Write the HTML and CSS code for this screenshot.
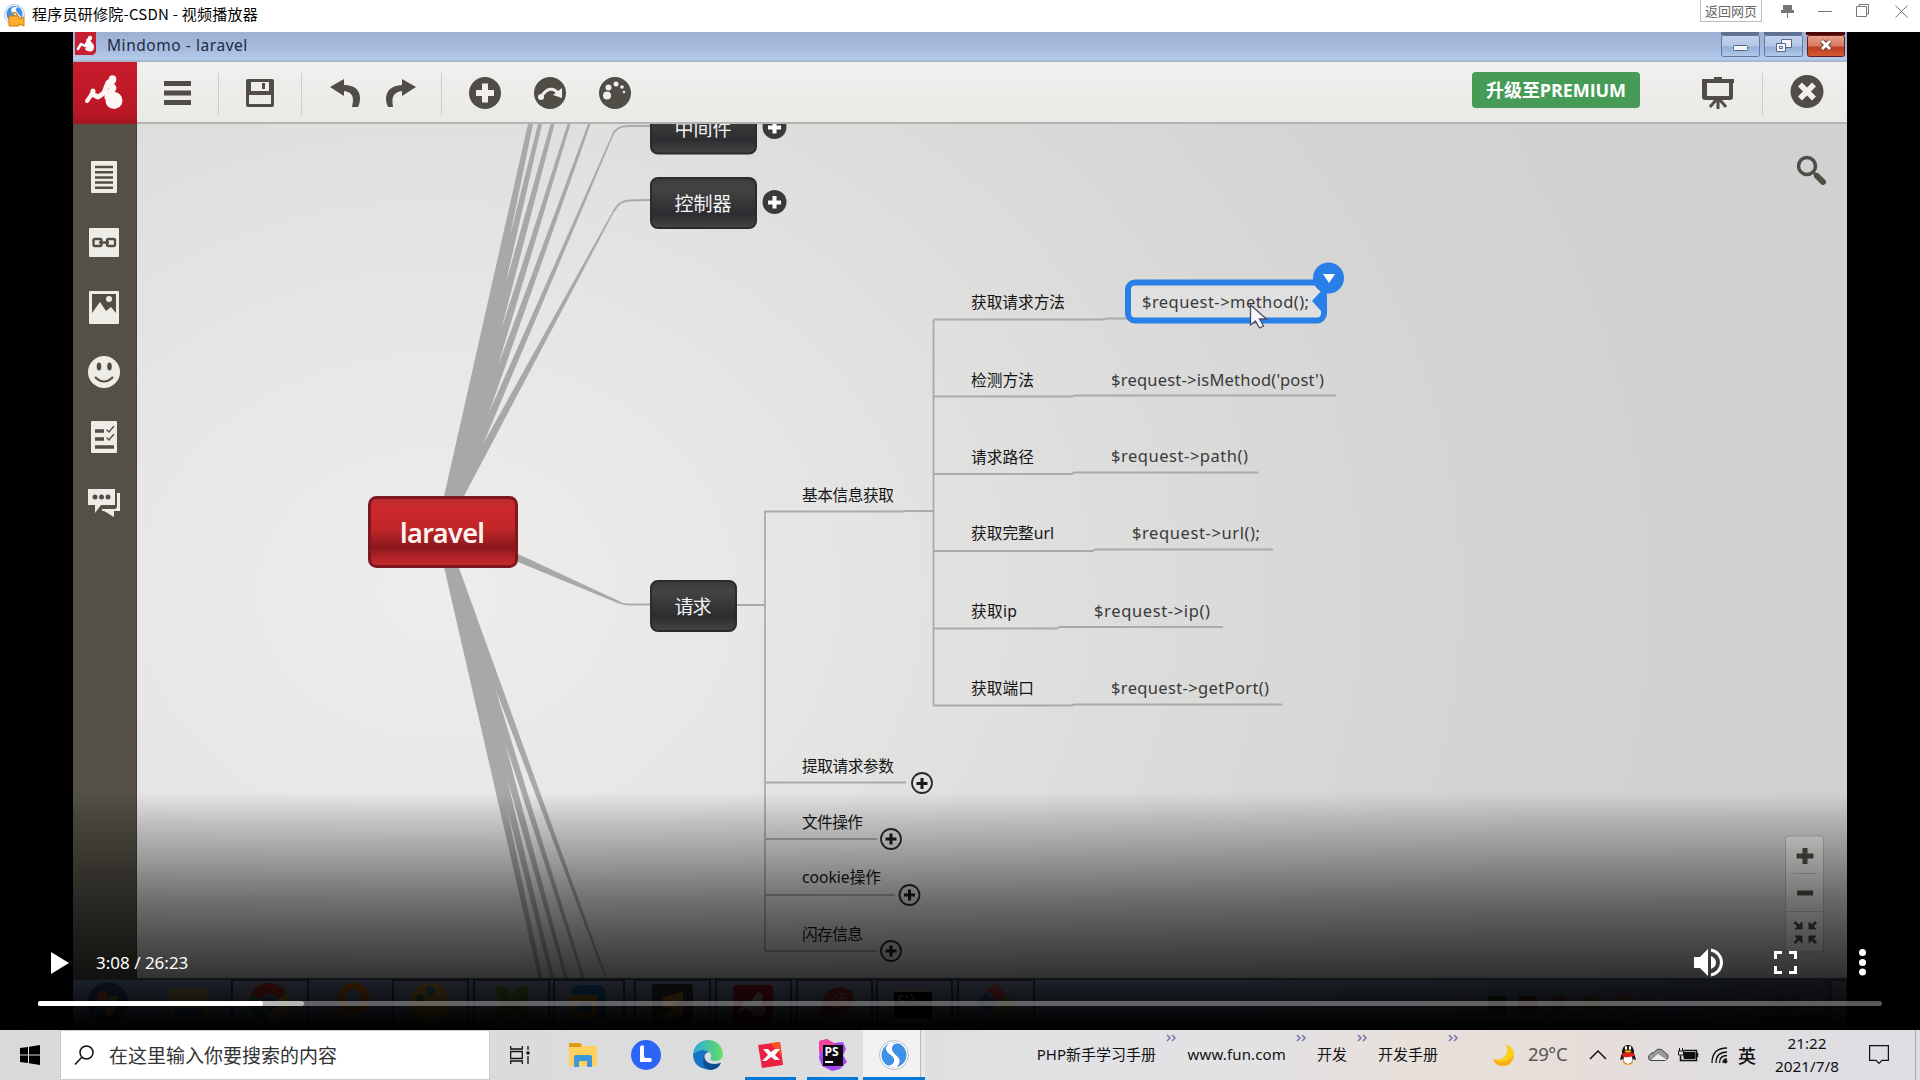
FILE: index.html
```html
<!DOCTYPE html>
<html lang="zh-CN">
<head>
<meta charset="utf-8">
<title>程序员研修院-CSDN - 视频播放器</title>
<link rel="stylesheet" href="styles.css">
</head>
<body>
<div class="screen">
  <header class="window-bar">
    <svg class="window-icon" width="22" height="26" viewBox="0 0 22 26"><circle cx="10.500" cy="11.500" r="10" fill="#eef5fb" stroke="#b7cbd9"/><circle cx="10.500" cy="11" r="8" fill="#3f8fe8"/><path d="M14 4C8 3 5 7 9 10l3 3c2 3-1 5-5 4l-2-1 2 4h6l4-6-4-5c-2-2-1-4 1-5z" fill="#fff"/><path d="M8 14v-3q2.500-3 5 0v3" fill="none" stroke="#d98209" stroke-width="1.500"/><path d="M5 13h10v3l5-2v9l-5-2v2H5z" fill="#fcae2c" stroke="#d37c0c"/></svg>
    <span class="window-title">程序员研修院-CSDN - 视频播放器</span>
    <span class="back-link">返回网页</span>
    <svg class="window-controls" width="158" height="32" viewBox="0 0 158 32" fill="none" stroke="#777"><path d="M21 5h9v5h2v3H19v-3h2z" fill="#777" stroke="none"/><path d="M25.500 12v6M56 11.500h14M94.500 6.500h10v10h-10zM97 6V4.500h9.500V14H105M133.500 5.500l12 12M145.500 5.500l-12 12"/></svg>
  </header>

  <main class="player">
    <div class="frame">
      <div class="app-title">
        <svg width="34" height="29" viewBox="0 0 34 29"><path d="M2 0h21v20l-3 3H2z" fill="#c51f31"/><g fill="none" stroke="#fff" stroke-linecap="round" stroke-linejoin="round"><path d="M5 17l3-5 4 2 3-5" stroke-width="2.500"/><path d="M15 8l2 3-3 6" stroke-width="3.500"/></g><circle cx="17" cy="6" r="2.200" fill="#fff"/><ellipse cx="17" cy="15" rx="4" ry="4.500" fill="#fff"/></svg>
        <span class="app-name">Mindomo - laravel</span>
        <svg class="app-buttons" width="128" height="29" viewBox="0 0 128 29">
          <defs><linearGradient id="glass" x2="0" y2="1"><stop stop-color="#c4d3ec"/><stop offset=".5" stop-color="#b3c6e5"/><stop offset=".55" stop-color="#91aed9"/><stop offset="1" stop-color="#b3cbea"/></linearGradient><linearGradient id="glass-red" x2="0" y2="1"><stop stop-color="#e8a08d"/><stop offset=".5" stop-color="#d87860"/><stop offset=".55" stop-color="#bb3d20"/><stop offset="1" stop-color="#d45c35"/></linearGradient></defs>
          <path d="M2 0h38v3H2zM45 0h38v3H45z" fill="#60708f"/><path d="M87 0h39v3H87z" fill="#4b0808"/>
          <rect x="2.500" y="3.500" width="38" height="21" rx="2" fill="url(#glass)" stroke="#60779f"/><rect x="45.500" y="3.500" width="38" height="21" rx="2" fill="url(#glass)" stroke="#60779f"/><rect x="88.500" y="3.500" width="37" height="21" rx="2" fill="url(#glass-red)" stroke="#651d20"/>
          <g fill="#f3f6fb" stroke="#566886"><rect x="14.500" y="13.500" width="14" height="5" rx="1"/><path d="M62.500 7.500h10v8h-10z"/><path d="M57.500 11.500h9v8h-9z"/><path d="M60.500 14.500h3v2h-3z"/></g>
          <path d="M103 9l8 8M111 9l-8 8" stroke="#714141" stroke-width="5"/><path d="M103 9l8 8M111 9l-8 8" stroke="#fff" stroke-width="3"/>
        </svg>
      </div>

      <div class="toolbar">
        <svg class="brand" width="64" height="63" viewBox="0 0 64 63"><g fill="none" stroke="#fff5f3" stroke-linecap="round" stroke-linejoin="round"><path d="M14 39l5-7" stroke-width="4"/><path d="M19 32l6 3 6-4 3-8" stroke-width="5"/><path d="M36 21l4 5-5 9" stroke-width="7"/></g><circle cx="20" cy="29" r="2.500" fill="#fff5f3"/><ellipse cx="39.500" cy="17.500" rx="3.800" ry="4.200" fill="#fff5f3"/><ellipse cx="41" cy="38.500" rx="8.500" ry="8.500" fill="#fff5f3"/></svg>
        <svg class="tools" width="520" height="61" viewBox="137 62 520 61" fill="#504d47">
          <path d="M218.500 73v42M301.500 73v42M441.500 73v42" stroke="#ccc"/>
          <path d="M164 81h27v5h-27zM164 90.500h27v5h-27zM164 100h27v5h-27z"/>
          <path d="M248 79h24q2 0 2 2v24q0 2-2 2h-24q-2 0-2-2V81q0-2 2-2zM251 82v9h18v-9zM249 95v9h22v-9z" fill-rule="evenodd"/><path d="M262 83h3v6h-3z"/>
          <path d="M330 87l14-8v6q16 0 16 14 0 4-2 8h-6q4-15-8-16v5z"/><path d="M416 87l-14-8v6q-16 1-16 14 0 4 2 8h5q-3-15 9-16v5z"/>
          <circle cx="485" cy="93" r="16"/><circle cx="550" cy="93" r="16"/><circle cx="615" cy="93" r="16"/>
          <path d="M485 83.500v19M476 93h18" stroke="#f0efec" stroke-width="6"/>
          <path d="M541 97q9-14 18-3" fill="none" stroke="#f0efec" stroke-width="3"/><path d="M562 88v10l-9-3z" fill="#f0efec"/><circle cx="541" cy="97" r="3" fill="#f0efec"/>
          <g fill="#f0efec"><circle cx="607" cy="95.500" r="4"/><circle cx="608.500" cy="87.500" r="3"/><circle cx="616" cy="84" r="2.500"/><circle cx="622" cy="87" r="1.800"/><circle cx="624" cy="92" r="1.300"/></g>
        </svg>
        <span class="premium">升级至PREMIUM</span>
        <svg width="190" height="61" viewBox="1657 62 190 61" fill="#504d47"><path d="M1702 79h12v-2h8v2h12v4h-1v14q0 3-3 3h-25q-3 0-3-3V83zM1707 83v13h22V83z" fill-rule="evenodd"/><path d="M1718 99v10M1716 100l-6 7M1720 100l6 7" stroke="#504d47" stroke-width="3"/><path d="M1762.500 73v42" stroke="#ccc"/><circle cx="1807" cy="91.500" r="16.500"/><path d="M1800 84.500l14 14M1814 84.500l-14 14" stroke="#f0efec" stroke-width="5.500"/></svg>
      </div>

      <div class="workspace">
        <svg class="sidebar" width="64" height="854" viewBox="73 124 64 854" fill="#edece7">
          <rect x="91" y="161" width="26" height="32" rx="1"/><path d="M95 167h18M95 172.200h18M95 177.400h18M95 182.600h18M95 187.800h18" stroke="#514e44" stroke-width="2.500"/>
          <rect x="89" y="228" width="30" height="29" rx="1"/><g fill="none" stroke="#514e44" stroke-width="2.400"><rect x="93.500" y="239" width="8" height="7" rx="1.500"/><rect x="107" y="239" width="8" height="7" rx="1.500"/><path d="M99 242.500h10"/></g>
          <rect x="89" y="291" width="30" height="33" rx="1"/><path d="M92 294h24v19l-5-6-5 4-6-9-8 11z" fill="#514e44"/><circle cx="109" cy="299" r="3"/>
          <circle cx="104" cy="372" r="16"/><g fill="#514e44"><ellipse cx="99" cy="366.500" rx="2.300" ry="4"/><ellipse cx="109.500" cy="366.500" rx="2.300" ry="4"/></g><path d="M95 377q9 9 18 0" fill="none" stroke="#514e44" stroke-width="2"/>
          <rect x="91" y="421" width="26" height="32" rx="1"/><path d="M95 431h9M95 439h9M95 447h19" stroke="#514e44" stroke-width="3.300"/><path d="M106.500 429.500l2.500 2.500 5-6M106.500 437.500l2.500 2.500 5-6" fill="none" stroke="#514e44" stroke-width="1.300"/>
          <path d="M88 489h27v16h-14l-6 8v-8h-7z"/><path d="M117 493h3v18h-6v6l-10-6h-2v-2h13q2 0 2-3z"/><g fill="#514e44"><circle cx="95" cy="497" r="2.500"/><circle cx="101.500" cy="497" r="2.500"/><circle cx="108" cy="497" r="2.500"/></g>
          <path d="M136.500 124v854" stroke="#454138"/>
        </svg>

        <svg class="mindmap" width="1710" height="854" viewBox="137 124 1710 854">
          <defs>
            <linearGradient id="root-fill" x2="0" y2="1"><stop stop-color="#bd2a30"/><stop offset=".2" stop-color="#cc292b"/><stop offset=".45" stop-color="#c12629"/><stop offset=".72" stop-color="#8c171c"/><stop offset=".95" stop-color="#c3292d"/></linearGradient>
            <linearGradient id="topic-fill" x2="0" y2="1"><stop stop-color="#3a3a3a"/><stop offset=".2" stop-color="#444"/><stop offset=".72" stop-color="#2c2d30"/><stop offset="1" stop-color="#464542"/></linearGradient>
          </defs>
          <g fill="#a6a8a9">
            <path d="M436 532L528 124h5L449 532zM436 532L538 124h4L449 532zM436 532L550.500 124h4L449 532zM436 532L567.500 124h3L448 532zM436 532L588 124h2.500L447 532z"/>
            <path d="M436 532L611.500 136h1.500L446 532zM434 532L613.500 210h1.500L445 532z"/>
            <path d="M443 514l75 40 103 48-1 2-102-42-75-22z"/>
            <path d="M436 532L538.500 978h4L449 532zM436 532L550.500 978h3.500L449 532zM436 532L564.500 978h3L449 532zM436 532L582 978h2.500L447 532zM436 532L605 978h2L446 532z"/>
          </g>
          <g class="links">
            <path d="M612 136q4-10 16-10h22M614 211q5-10 15-10.500l21-.5M620 603q5 1.500 10 1.500h20"/>
            <path d="M737 605h28M904 511.500h-139V951M904 511h29.500M933.500 705.500V320"/>
            <path d="M933.500 319.500H1104l2-1h22M933.500 396.500H1072l2-1h262M933.500 474H1072l2-1.500h184M933.500 551H1093l2-1.500h178M933.500 628.500H1057l2-1.500h164M933.500 705.500H1072l2-1h208"/>
            <path d="M765 782.500h141M765 839h112M765 895h130M765 951h112"/>
          </g>
          <rect x="369.500" y="497.500" width="147" height="69" rx="7" fill="url(#root-fill)" stroke="#7d1820" stroke-width="3"/>
          <text class="root-text" x="400" y="543" textLength="85">laravel</text>
          <g fill="url(#topic-fill)" stroke="#2b2b2b" stroke-width="2"><rect x="651" y="103" width="105" height="50.500" rx="7"/><rect x="651" y="178" width="105" height="50" rx="7"/><rect x="651" y="581" width="85" height="50" rx="7"/></g>
          <g class="topic-text"><text x="674.500" y="136" textLength="57">中间件</text><text x="674.500" y="211" textLength="57">控制器</text><text x="674.500" y="614" textLength="37">请求</text></g>
          <g fill="#3b3a38"><circle cx="774.500" cy="127" r="12"/><circle cx="774.500" cy="202" r="12"/></g>
          <path d="M774.500 121v12.500M768 127.500h13M774.500 196v12.500M768 202.500h13" stroke="#fff" stroke-width="4"/>
          <g class="topic-sub">
            <text x="802" y="501" textLength="92">基本信息获取</text><text x="802" y="772" textLength="92">提取请求参数</text><text x="802" y="828" textLength="61">文件操作</text><text x="802" y="883" textLength="79">cookie操作</text><text x="802" y="940" textLength="61">闪存信息</text>
            <text x="971" y="308" textLength="94">获取请求方法</text><text x="971" y="386" textLength="63">检测方法</text><text x="971" y="463" textLength="63">请求路径</text><text x="971" y="539" textLength="83">获取完整url</text><text x="971" y="617" textLength="46">获取ip</text><text x="971" y="694" textLength="63">获取端口</text>
          </g>
          <rect x="1128" y="282.500" width="196" height="38" rx="7" fill="#e0e0e0" stroke="#287fe8" stroke-width="6"/>
          <path d="M1312 301l10-11h5v22h-5z" fill="#287fe8"/><circle cx="1328.500" cy="278" r="15.500" fill="#287fe8"/><path d="M1323 274h12l-6 9z" fill="#fff"/>
          <g class="code">
            <text x="1142" y="307.500" textLength="167">$request-&gt;method();</text><text x="1111" y="385.500" textLength="213">$request-&gt;isMethod('post')</text><text x="1111" y="462" textLength="137">$request-&gt;path()</text><text x="1132" y="539" textLength="128">$request-&gt;url();</text><text x="1094" y="616.500" textLength="116">$request-&gt;ip()</text><text x="1111" y="693.500" textLength="158">$request-&gt;getPort()</text>
          </g>
          <path d="M1250.500 305v20l5-4 4 7 4-2-4-7h7z" fill="#f8f8ff" stroke="#4a4a5c" stroke-width="1.300"/>
          <g fill="none" stroke="#2a2a29" stroke-width="1.800"><circle cx="922" cy="783" r="10"/><circle cx="891" cy="839" r="10"/><circle cx="909.500" cy="895" r="10"/><circle cx="891" cy="951" r="10"/></g>
          <path d="M922 778v11M916.500 783.500h11M891 833.500v11M885.500 839h11M909.500 889.500v11M904 895h11M891 945.500v11M885.500 951h11" stroke="#1a1a1a" stroke-width="3"/>
          <g fill="none" stroke="#504d47"><circle cx="1807" cy="166" r="8.500" stroke-width="3.500"/><path d="M1813 172l3 3" stroke-width="3"/><path d="M1817 176l6 6" stroke-width="6" stroke-linecap="round"/></g>
          <rect x="1785.500" y="836" width="38" height="116" rx="3" fill="#e9e8e5" stroke="#b5b5b5"/><path d="M1793 873.500h23M1786 911.500h38" stroke="#c2c1be"/>
          <path d="M1805 848v16M1796.500 856h17M1797 893h16" stroke="#504d47" stroke-width="5"/>
          <g fill="#504d47" stroke="#504d47" stroke-width="3"><path d="M1794.500 922l6 6M1816 922l-6 6M1794.500 943l6-6M1816 943l-6-6"/><path d="M1802 922v7h-7zM1809 922v7h7zM1802 943v-7h-7zM1809 943v-7h7z" stroke-width="1"/></g>
        </svg>
      </div>

      <svg class="old-taskbar" width="1774" height="52" viewBox="73 978 1774 52">
        <path d="M73 979h1774" stroke="#4c5871" stroke-width="2"/>
        <g fill="#b1bac9" fill-opacity=".25" stroke="#3b455a" stroke-width="2"><path d="M232 980h76v50h-76zM393 980h75v50h-75zM474 980h75v50h-75zM554 980h70v50h-70zM635 980h75v50h-75zM716 980h75v50h-75zM797 980h75v50h-75zM877 980h75v50h-75zM958 980h76v50h-76zM1831 980h16v50h-16z"/></g>
        <circle cx="108" cy="1003" r="21" fill="#304f7e" stroke="#7993b7"/><path d="M98 993q6-4 10 1l-2 9q-6-4-10 0z" fill="#dc602e"/><path d="M109 995q5 3 9 0l-3 10q-5 3-9 0z" fill="#7fb03a"/><path d="M95 1005q6-3 10 0l-2 9q-5-4-9 0z" fill="#438fd1"/><path d="M106 1006q5 3 9 0l-2 9q-5 3-9 0z" fill="#f2be38"/>
        <path d="M169 989l39-1 1 31h-38z" fill="#bca658"/><path d="M174 1008h30v14h-30z" fill="#5c88a7"/>
        <path d="M251 994a20 20 0 0 1 36 0l-18 9z" fill="#c8372b"/><path d="M251 994q-5 22 15 28l3-18z" fill="#3b9a48"/><path d="M287 994q5 25-19 28l3-18z" fill="#e1bc2c"/><circle cx="269" cy="1003" r="8" fill="#306cc1" stroke="#8f9cab" stroke-width="2"/>
        <circle cx="354" cy="998" r="12" fill="none" stroke="#dc7610" stroke-width="7"/><path d="M345 1008l-12 12" stroke="#dc7610" stroke-width="8"/>
        <circle cx="430" cy="1003" r="20" fill="#d8a732"/><circle cx="430" cy="991" r="5" fill="#3e8d9c"/><circle cx="420" cy="998" r="4" fill="#42852e"/>
        <path d="M494 987q12-4 18 10 6-16 18-8l-5 15q10 8 0 17l-12-7-14 7q-8-9 1-17z" fill="#6c922a"/>
        <rect x="571" y="985" width="35" height="34" rx="8" fill="#2277bd"/><path d="M571 995h26v24h-20q-6 0-6-8zM578 1002v11h14v-11z" fill="#d59b28" fill-rule="evenodd"/>
        <rect x="652" y="984" width="41" height="42" rx="3" fill="#3b3b38"/><path d="M663 997l20-5v8l-11 4 11 3v8l-21 6v-7l11-4-10-4z" fill="#e29b27"/>
        <rect x="733" y="985" width="40" height="38" rx="4" fill="#a91627"/><path d="M738 1012l7-11 5 1 8-10 5 3-2 9q7 4 3 10-9 7-12-2l-6-4-5 4z" fill="#ded1ca"/>
        <path d="M818 1015l6-20q13-14 29-3 2 17-11 24-12 4-24-1z" fill="#a73933"/><path d="M844 994q-13 0-12 12 10 5 14-8-8-3-8 6" fill="none" stroke="#df6b5f" stroke-width="2"/>
        <path d="M894 988h38v30h-38z"/><path d="M894 988h38v4h-38z" fill="#aaa"/><text class="prompt" x="898" y="1002">C:\_</text>
        <path d="M995 983l12 12-8 8-12-12z" fill="#d55441"/><path d="M986 992l11 11-9 9-12-9z" fill="#405fae"/><path d="M1008 995l8 8-18 18-8-9z" fill="#9a982b"/>
        <g fill="none" stroke="#777" stroke-width="2"><path d="M1459 998h10v14h-10zM1647 1004l16-6-5 16-4-7zM1737 998h12v14h-12zM1803 998h15v12h-15z"/><path d="M1677 997l8 4q0 9-8 12-8-3-8-12z" stroke="#4964a8"/></g>
        <path d="M1488 996h18v18h-18z" fill="#1d3f22"/><path d="M1519 996h18v18h-18z" fill="#522"/><path d="M1552 996h14v18h-14z" fill="#644"/><circle cx="1591" cy="1004" r="9" fill="#67592a"/><circle cx="1623" cy="1003" r="7" fill="none" stroke="#864e1e" stroke-width="4"/><circle cx="1781" cy="1006" r="6" fill="none" stroke="#833" stroke-width="3"/>
      </svg>
    </div>

    <div class="controls">
      <div class="control-row">
        <svg class="play" width="18" height="24" viewBox="0 0 18 24"><path d="M0 1l18 11L0 23z" fill="#fff"/></svg>
        <span class="time">3:08 / 26:23</span>
        <svg class="control-icons" width="190" height="34" viewBox="1685 946 190 34" fill="#fff"><path d="M1694 957h6l8-8v27l-8-8h-6zM1711 956q5 2 5 6.500t-5 6.500z"/><path d="M1711 950a12.700 12.700 0 0 1 0 25" fill="none" stroke="#fff" stroke-width="3"/><path d="M1774 959v-8h8v3h-5v5zM1789 951h8v8h-3v-5h-5zM1774 966h3v5h5v3h-8zM1794 966h3v8h-8v-3h5z"/><circle cx="1862.500" cy="952.500" r="3.500"/><circle cx="1862.500" cy="962.500" r="3.500"/><circle cx="1862.500" cy="972" r="3.500"/></svg>
      </div>
      <div class="progress"><div class="buffered"><div class="played"></div></div></div>
    </div>
  </main>

  <footer class="taskbar">
    <div class="cell"><svg width="20" height="20" viewBox="0 0 20 20"><path d="M0 3l8-1v7.500H0zM9 1.800L20 0v9.500H9zM0 10.500h8V18l-8-1zM9 10.500h11V20L9 18.200z"/></svg></div>
    <div class="search"><svg width="20" height="20" viewBox="0 0 20 20" fill="none" stroke="#111" stroke-width="1.500"><circle cx="12.500" cy="7.500" r="6.500"/><path d="M8 12l-7 7.500"/></svg><span>在这里输入你要搜索的内容</span></div>
    <div class="cell"><svg width="20" height="20" viewBox="0 0 20 20" fill="none" stroke="#111" stroke-width="1.300"><path d="M.7 1v3h11.600V1M.7 19v-3h11.600v3M.7 6.500h11.600v7H.7zM18 1v4M18 11v8"/><path d="M16.500 6.500h3v3h-3z" fill="#111" stroke="none"/></svg></div>
    <div class="cell"><svg width="28" height="24" viewBox="0 0 28 24"><path d="M0 1q0-1 1-1h10l2 3h15v20H0z" fill="#ffd05c"/><path d="M0 4V1q0-1 1-1h10l2 2-2 2z" fill="#dc9b10"/><path d="M5 24V14q0-2 2-2h14q2 0 2 2v10h-5v-6h-8v6z" fill="#3c98dc"/></svg></div>
    <div class="cell"><svg width="30" height="30" viewBox="0 0 30 30"><circle cx="15" cy="15" r="15" fill="#2a65f8"/><path d="M9 7q1-3 4-1v10q0 2 2 2h4q3 0 1 4H9z" fill="#fff"/></svg></div>
    <div class="cell"><svg width="30" height="30" viewBox="0 0 30 30"><defs><linearGradient id="edge-top"><stop stop-color="#27a7dc"/><stop offset="1" stop-color="#67df63"/></linearGradient></defs><path d="M0 14C2-4 28-5 30 14q0 7-8 7-6 0-4-4 1-3-2-5Q9 7 0 14z" fill="url(#edge-top)"/><path d="M0 14q9-7 16-2-5 1-5 7 1 9 17 4-6 9-16 6Q0 26 0 14z" fill="#1672c3"/><path d="M11 16q-3 12 6 14 8 0 11-7-15 4-17-7z" fill="#0c4d91"/></svg></div>
    <div class="cell running"><svg width="26" height="28" viewBox="0 0 26 28"><path d="M0 4L22 1l3 23-21 3z" fill="#ed1f43"/><path d="M12 2l10-1 2 14z" fill="#ff5026"/><path d="M5 8h5l3 3 4-3h5l-5 6 5 5h-5l-4-3-5 4H4l6-6z" fill="#fff"/></svg></div>
    <div class="cell running"><svg width="30" height="32" viewBox="0 0 30 32"><path d="M1 2l8-2 7 4 9-1 3 7-3 6 4 7-7 7-8 2-10-5-3-8 1-8z" fill="#a348ef"/><path d="M1 2l8-2 8 5-16 9z" fill="#f0459a"/><path d="M5 6h20v21H5z" fill="#0c0711"/><text class="ps" x="6.500" y="17">PS</text><path d="M7 22h8v2H7z" fill="#fff"/></svg></div>
    <div class="cell running active"><svg width="30" height="30" viewBox="0 0 30 30"><circle cx="15" cy="15" r="14.500" fill="#fff" stroke="#bbb"/><circle cx="15" cy="15" r="12.500" fill="#3e90e9"/><path d="M21 3q-9 0-8 7 1 3 6 7 4 5-2 11l-9-2q8-1 7-7-1-3-6-6-5-6 2-10z" fill="#fff"/></svg></div>
    <div class="link-item">PHP新手学习手册<svg width="11" height="8" viewBox="0 0 11 8"><path d="M1 1l3 3-3 3M6 1l3 3-3 3"/></svg></div>
    <div class="link-item web">www.fun.com<svg width="11" height="8" viewBox="0 0 11 8"><path d="M1 1l3 3-3 3M6 1l3 3-3 3"/></svg></div>
    <div class="link-item">开发<svg width="11" height="8" viewBox="0 0 11 8"><path d="M1 1l3 3-3 3M6 1l3 3-3 3"/></svg></div>
    <div class="link-item">开发手册<svg width="11" height="8" viewBox="0 0 11 8"><path d="M1 1l3 3-3 3M6 1l3 3-3 3"/></svg></div>
    <div class="weather"><svg width="24" height="24" viewBox="0 0 24 24"><path d="M14 1q9 4 8 12-2 10-12 10-6 0-9-7 8 2 12-3 4-5 1-12z" fill="#fdce18"/><path d="M22 13q-2 10-12 10-6 0-9-7 9 7 21-3z" fill="#faac18"/></svg><span>29°C</span></div>
    <div class="tray"><svg width="150" height="50" viewBox="1585 1030 150 50" fill="none" stroke="#111"><path d="M1590 1059l8-8 8 8" stroke-width="1.500"/><g stroke="none"><ellipse cx="1628" cy="1062" rx="5" ry="3" fill="#f6a800"/><path d="M1622 1053q0-8 6-8t6 8l2 7-3-1q-1 5-5 5t-5-5l-3 1z" fill="#111"/><ellipse cx="1628" cy="1059" rx="4.500" ry="5" fill="#fff"/><path d="M1622 1053h12v3q-7 2-11 1z" fill="#e02020"/><ellipse cx="1626" cy="1048" rx="1.200" ry="2" fill="#fff"/><ellipse cx="1630" cy="1048" rx="1.200" ry="2" fill="#fff"/><ellipse cx="1628" cy="1051.500" rx="3.500" ry="1.200" fill="#f6a800"/></g><path d="M1651 1060.500q-4-1-2-5 2-3 5-3 5-7 11 0 4 2 3 5-1 3-4 3z" fill="#999" stroke="#444"/><path d="M1651 1060l7-6 9 6z" fill="#eee" stroke="none"/><path d="M1683.500 1050.500h13v10h-16v-5M1697.500 1053v4" stroke-width="1.500"/><path d="M1684 1052.500h11v6h-11z" fill="#111"/><path d="M1678.500 1051h5v4h-5zM1679.500 1051v-3M1682.500 1051v-3"/><path d="M1712 1063q0-15 15-15M1716 1063q0-11 11-11M1719.500 1063q0-7.500 7.500-7.500M1723 1063q0-4 4-4" stroke-width="1.300"/><circle cx="1725.500" cy="1061.500" r="1.500" fill="#111"/></svg><span class="ime">英</span></div>
    <div class="clock"><span>21:22</span><span>2021/7/8</span></div>
    <div class="notice"><svg width="20" height="20" viewBox="0 0 20 20" fill="none" stroke="#111" stroke-width="1.200"><path d="M.6.6h18.800v14.800H13l-3 3-3-3H.6z"/></svg></div>
  </footer>
</div>
</body>
</html>
```
FILE: styles.css
```css
* { box-sizing: border-box; }
body { margin: 0; font-family: "Noto Sans", "Noto Sans CJK SC", sans-serif; color: #111; }
svg { display: block; flex: none; }
.screen { width: 1920px; height: 1080px; display: flex; flex-direction: column; overflow: hidden; background: #000; }

.window-bar { height: 32px; display: flex; background: #fff; padding-left: 4px; }
.window-icon { margin-top: 3px; }
.window-title { margin-left: 6px; font: 15px/27px "Noto Sans CJK SC", sans-serif; letter-spacing: .24px; color: #000; white-space: nowrap; }
.back-link { margin-left: auto; width: 62px; height: 22px; border: 1px solid #bbb; border-top: 0; text-align: center; font: 13px/21px "Noto Sans CJK SC", sans-serif; color: #666; }

.player { position: relative; height: 998px; display: flex; justify-content: center; }
.frame { width: 1774px; height: 998px; display: flex; flex-direction: column; }
.app-title { height: 30px; display: flex; background: linear-gradient(#9bb0d3, #a7bcdf 60%, #b4cbec 90%, #a5adc4); }
.app-name { font-size: 15.5px; line-height: 27px; color: #202c42; letter-spacing: .55px; white-space: nowrap; }
.app-buttons { margin-left: auto; }
.toolbar { height: 62px; display: flex; background: linear-gradient(#f1f0ef, #e9e9e5); border-bottom: 2px solid #b4b3b1; }
.brand { background: linear-gradient(#c71c2b, #bb1725 80%, #9b1520); margin-bottom: -2px; }
.premium { margin: 10px 17px 0 auto; width: 168px; height: 36px; border-radius: 4px; background: #469c57; color: #fff; text-align: center; font: 700 18px/37px "Open Sans", "Noto Sans CJK SC", sans-serif; white-space: nowrap; letter-spacing: -.1px; }
.workspace { height: 854px; display: flex; }
.sidebar { background: #545047; }
.mindmap { background: radial-gradient(ellipse 1550px 1250px at 300px 470px, #eeedec, #e6e6e5 23%, #d9d9d8 53%, #d2d2d2 72%, #d1d1d1); }
.links { fill: none; stroke: #a9aaaa; stroke-width: 1.8; }
.root-text { font-size: 27px; font-weight: 600; fill: #fff3f0; }
.topic-text { font-family: "Noto Sans CJK SC", sans-serif; font-size: 19px; fill: #f4f4f4; }
.topic-sub { font-family: "Noto Sans", "Noto Sans CJK SC", sans-serif; font-size: 15.7px; fill: #151515; }
.code { font-size: 16.5px; fill: #3a3a3a; }
.prompt { font: 10px "Liberation Mono", monospace; fill: #ddd; }
.old-taskbar { background: linear-gradient(90deg, #8096bf, #869cbe 65%, #4c5668); }

.controls { position: absolute; inset: 0; display: flex; flex-direction: column; justify-content: flex-end; background: linear-gradient(transparent 760px, rgba(0,0,0,.15) 788px, rgba(0,0,0,.33) 828px, rgba(0,0,0,.51) 868px, rgba(0,0,0,.65) 908px, rgba(0,0,0,.75) 938px, rgba(0,0,0,.84) 960px, rgba(0,0,0,.93) 978px, #000 998px); }
.control-row { display: flex; align-items: center; height: 34px; margin: 0 45px 21px 51px; }
.time { margin-left: 27px; color: #fff; font-size: 17px; line-height: 24px; white-space: nowrap; }
.control-icons { margin-left: auto; }
.progress { height: 5px; margin: 0 38px 24px; border-radius: 3px; background: rgba(255,255,255,.35); }
.buffered { width: 266px; height: 5px; border-radius: 3px; background: #b6b6b6; }
.played { width: 225px; height: 5px; border-radius: 3px; background: #fff; }

.taskbar { height: 50px; display: grid; grid-template-columns: 60px 430px 60px 65px 62px 62px 63px 61px 62px 262px 130px 61px 91px 116px 170px 104px 61px; background: linear-gradient(90deg, #d9d9d9, #dcdcdc 38%, #e2e2e5 55%, #e2e1e4 65%, #e8e0da 74%, #e7ded9 82%, #dfdde0 90%, #dedee2); }
.cell { display: flex; align-items: center; justify-content: center; }
.search { display: flex; align-items: center; gap: 15px; padding-left: 13px; background: #fff; border: 1px solid #ccc; font: 19px "Noto Sans CJK SC", sans-serif; color: #333; white-space: nowrap; }
.search span { margin-top: -2px; }
.running { background: linear-gradient(#0078d7, #0078d7) center bottom / 51px 3px no-repeat; }
.active { background: linear-gradient(#0078d7, #0078d7) center bottom / 100% 3px no-repeat, linear-gradient(90deg, #f2f2f2 57px, #bbb 57px, #bbb 58px, #e9e9eb 58px); }
.link-item { display: flex; justify-content: flex-end; font-family: "Noto Sans", "Noto Sans CJK SC", sans-serif; font-size: 15px; line-height: 49px; white-space: nowrap; }
.link-item svg { margin: 4px 10px 0; fill: none; stroke: #7676b0; stroke-width: 1.5; }
.web { letter-spacing: .15px; }
.weather { display: flex; align-items: center; gap: 12px; padding-left: 23px; font-size: 18.5px; line-height: 22px; color: #555; letter-spacing: -.4px; white-space: nowrap; }
.weather span { margin-top: -2px; }
.tray { display: flex; align-items: center; }
.ime { margin-left: 3px; font: 500 18px "Noto Sans CJK SC", sans-serif; }
.clock { display: flex; flex-direction: column; justify-content: center; text-align: center; font-size: 15.3px; line-height: 23px; }
.notice { display: flex; align-items: center; padding-left: 10px; border-right: 1px solid #aaa; margin-right: 4px; }
.ps { font: 700 12px "Open Sans", sans-serif; fill: #fff; }
```
